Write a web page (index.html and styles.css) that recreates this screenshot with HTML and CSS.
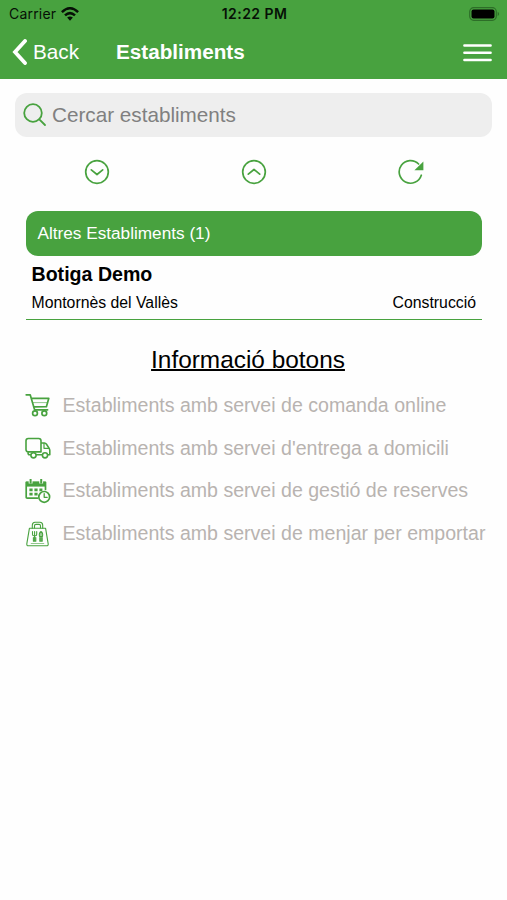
FILE: index.html
```html
<!DOCTYPE html>
<html lang="ca">
<head>
<meta charset="utf-8">
<title>Establiments</title>
<link rel="stylesheet" href="styles.css">
</head>
<body>
<header class="header">
  <div class="status">
    <div class="carrier"><span>Carrier</span>
      <svg width="18" height="14" viewBox="0 0 18 14"><g fill="none" stroke="#061006" stroke-width="2.5"><path d="M.9 5.1Q9-2.5 17.1 5.1"/><path d="M4 8.4Q9 3.8 14 8.4"/></g><path d="M9 13.7l-2.9-3.1Q9 8.5 11.9 10.6Z" fill="#061006"/></svg>
    </div>
    <div class="clock">12:22 PM</div>
    <svg class="battery" width="31" height="14" viewBox="0 0 31 14"><rect x=".7" y=".7" width="26.6" height="12.6" rx="4" fill="none" stroke="#2d6e28" stroke-width="1.2"/><rect x="2.5" y="2.4" width="23" height="9.2" rx="2" fill="#000"/><path d="M28.7 4.8q2.8 2.2 0 4.4Z" fill="#2d6e28"/></svg>
  </div>
  <nav class="nav">
    <a class="back"><svg width="16" height="26" viewBox="0 0 16 26"><path d="M13 2L3 13l10 11" fill="none" stroke="#fff" stroke-width="3.8" stroke-linecap="round"/></svg><span>Back</span></a>
    <h1 class="title">Establiments</h1>
    <svg class="menu" width="29" height="19" viewBox="0 0 29 19"><path d="M1.4 2.4h26.2M1.4 9.7h26.2M1.4 17h26.2" stroke="#fff" stroke-width="2.5" stroke-linecap="round"/></svg>
  </nav>
</header>
<main>
  <div class="search">
    <svg width="24" height="24" viewBox="0 0 24 24"><g fill="none" stroke="#48a23f" stroke-width="1.8" stroke-linecap="round"><circle cx="10" cy="10" r="8.8"/><path d="M16.3 16.3l5.7 5.7"/></g></svg>
    <span>Cercar establiments</span>
  </div>
  <div class="actions">
    <svg width="26" height="26" viewBox="0 0 26 26"><g class="line"><circle cx="13" cy="13" r="11.3"/><path d="M7.3 10.8l5.7 4.7 5.7-4.7"/></g></svg>
    <svg width="26" height="26" viewBox="0 0 26 26"><g class="line"><circle cx="13" cy="13" r="11.3"/><path d="M7.3 15.2l5.7-4.7 5.7 4.7"/></g></svg>
    <svg width="26" height="26" viewBox="0 0 26 26"><path class="line" d="M20.6 5A11.3 11.3 0 1 0 23.3 16.2"/><path d="M25.4 2.6v8.6h-9Z" fill="#48a23f"/></svg>
  </div>
  <section class="group">
    <h2 class="group-title">Altres Establiments (1)</h2>
    <article class="shop">
      <h3>Botiga Demo</h3>
      <div class="meta"><span>Montornès del Vallès</span><span>Construcció</span></div>
    </article>
  </section>
  <h2 class="info-title">Informació botons</h2>
  <ul class="legend">
    <li><svg width="26" height="26" viewBox="0 0 26 26"><g class="line"><path d="M1.2 2.8h4l4.4 15h13M6.6 6.3h17.2l-2.4 8.4-12.6.2"/><path d="M7.7 10.6h14.6" stroke-width=".6"/><circle cx="10" cy="21.2" r="2.4"/><circle cx="19.3" cy="21.2" r="2.4"/></g></svg><span>Establiments amb servei de comanda online</span></li>
    <li><svg width="26" height="26" viewBox="0 0 26 26"><g class="line truck"><path d="M5.5 19.8H4.4Q3.2 19.8 2.9 17.3M3.3 3.5h10.4Q16 3.5 16 5.8v11.1H3.3Q1 16.9 1 14.6V5.8Q1 3.5 3.3 3.5ZM16 8h3.4q1.3 0 2.1 1.2l2.5 3.9q.8 1.2.8 2.4v4.3h-2M11.5 19.8h6"/><path d="M19 8.3v5h5.2" stroke-width="1.2"/><circle cx="8.5" cy="20.3" r="2.6"/><circle cx="20" cy="20.3" r="2.6"/></g></svg><span>Establiments amb servei d'entrega a domicili</span></li>
    <li><svg width="26" height="26" viewBox="0 0 26 26"><g class="line"><path d="M12.5 20.2H2.2q-1 0-1-1V4.3h19.3v7.2"/><circle cx="19.2" cy="18.9" r="5.4"/><path d="M19.2 15.6v3.7h3" stroke-width="1.3"/></g><path d="M1 3.7h19.7v4.9H1Z" fill="#48a23f"/><path d="M5.6 1v4.5M16.2 1v4.5" stroke="#fff" stroke-width="3.8"/><path d="M5.6 1v4.5M16.2 1v4.5" stroke="#48a23f" stroke-width="2"/><path d="M4.4 11.9h13M4.4 16.2h8.4" stroke="#48a23f" stroke-width="2.8" stroke-dasharray="3.2 1.8"/></svg><span>Establiments amb servei de gestió de reserves</span></li>
    <li><svg width="26" height="26" viewBox="0 0 26 26"><g class="line bag"><path d="M4.4 7.3h16.2l2.6 15.6q.2 1.9-1.6 1.9H3.4q-1.8 0-1.6-1.9Z"/><path d="M7.3 7.2V4.4Q7.3 1.2 10 1.2h5q2.7 0 2.7 3.2v2.8M9.5 7V4.8q0-1.4 1.4-1.4h3.2q1.4 0 1.4 1.4V7"/><path d="M6.2 22.5h12.6" stroke-width=".6"/><path d="M7.5 10.5v2.8q0 1.5 1.2 1.5h1.8q1.2 0 1.2-1.5v-2.8M9.6 10.5V20M16 10.5q-2.2 1-1.5 5H16ZM16 10.5q2.2 1 1.5 5H16V20M8.4 16.5v3.8h2.4v-3.8M14.8 16.5v3.8h2.4v-3.8"/></g></svg><span>Establiments amb servei de menjar per emportar</span></li>
  </ul>
</main>
</body>
</html>
```
FILE: styles.css
```css
* { box-sizing: border-box; }
body {
  margin: 0;
  background: #fefefe;
  color: #000;
  font-family: "Liberation Sans", Arial, sans-serif;
}
h1, h2, h3, ul { margin: 0; padding: 0; font-weight: normal; }
svg { display: block; flex: none; }
span, h1, h2, h3 { white-space: nowrap; }
.header { height: 79px; background: #48a23f; }
.status {
  height: 27px;
  padding: 1px 7px 0 9px;
  display: grid;
  grid-template-columns: 1fr auto 1fr;
  align-items: center;
  font: 500 14px/26px Inter, sans-serif;
  color: #061006;
}
.carrier { display: flex; align-items: center; gap: 5px; font-weight: 400; letter-spacing: .2px; }
.clock { font-weight: 600; letter-spacing: .45px; }
.battery { justify-self: end; }
.nav {
  height: 50px;
  padding: 0 15px 0 12px;
  display: flex;
  align-items: center;
  color: #fff;
  font-size: 20.7px;
}
.back { width: 104px; display: flex; align-items: center; gap: 5px; }
.title { font-size: 20.7px; font-weight: bold; }
.menu { margin-left: auto; }
.search {
  height: 44px;
  margin: 14px 15px 0;
  padding-left: 8px;
  border-radius: 12px;
  background: #eee;
  color: #808080;
  display: flex;
  align-items: center;
  gap: 5px;
  font-size: 20.7px;
}
.actions {
  margin-top: 22px;
  padding: 0 18px 0 19px;
  display: grid;
  grid-template-columns: repeat(3, 1fr);
  justify-items: center;
}
.line { fill: none; stroke: #48a23f; stroke-width: 1.7; stroke-linejoin: round; stroke-linecap: round; }
.truck { stroke-width: 1.6; }
.bag { stroke-width: 1.1; }
.group { margin: 26px 25px 0 26px; }
.group-title {
  height: 45px;
  padding-left: 11.5px;
  border-radius: 12px;
  background: #48a23f;
  color: #fff;
  font-size: 17.2px;
  line-height: 45px;
}
.shop { height: 64px; padding: 6px 6px 0 5.5px; border-bottom: 1px solid #48a23f; }
.shop h3 { font-size: 19.6px; font-weight: bold; line-height: 24px; }
.meta { display: flex; justify-content: space-between; margin-top: 7px; font-size: 15.8px; line-height: 20px; }
.info-title {
  margin: 24px 0 0;
  padding-right: 11px;
  text-align: center;
  font-size: 24.4px;
  line-height: 32px;
  text-decoration: underline;
  text-decoration-thickness: 1.5px;
}
.legend { margin: 8px 0 0 25px; list-style: none; }
.legend li {
  height: 42.8px;
  display: flex;
  align-items: center;
  gap: 11.5px;
  color: #b8b3b0;
  font-size: 19.57px;
}
```
